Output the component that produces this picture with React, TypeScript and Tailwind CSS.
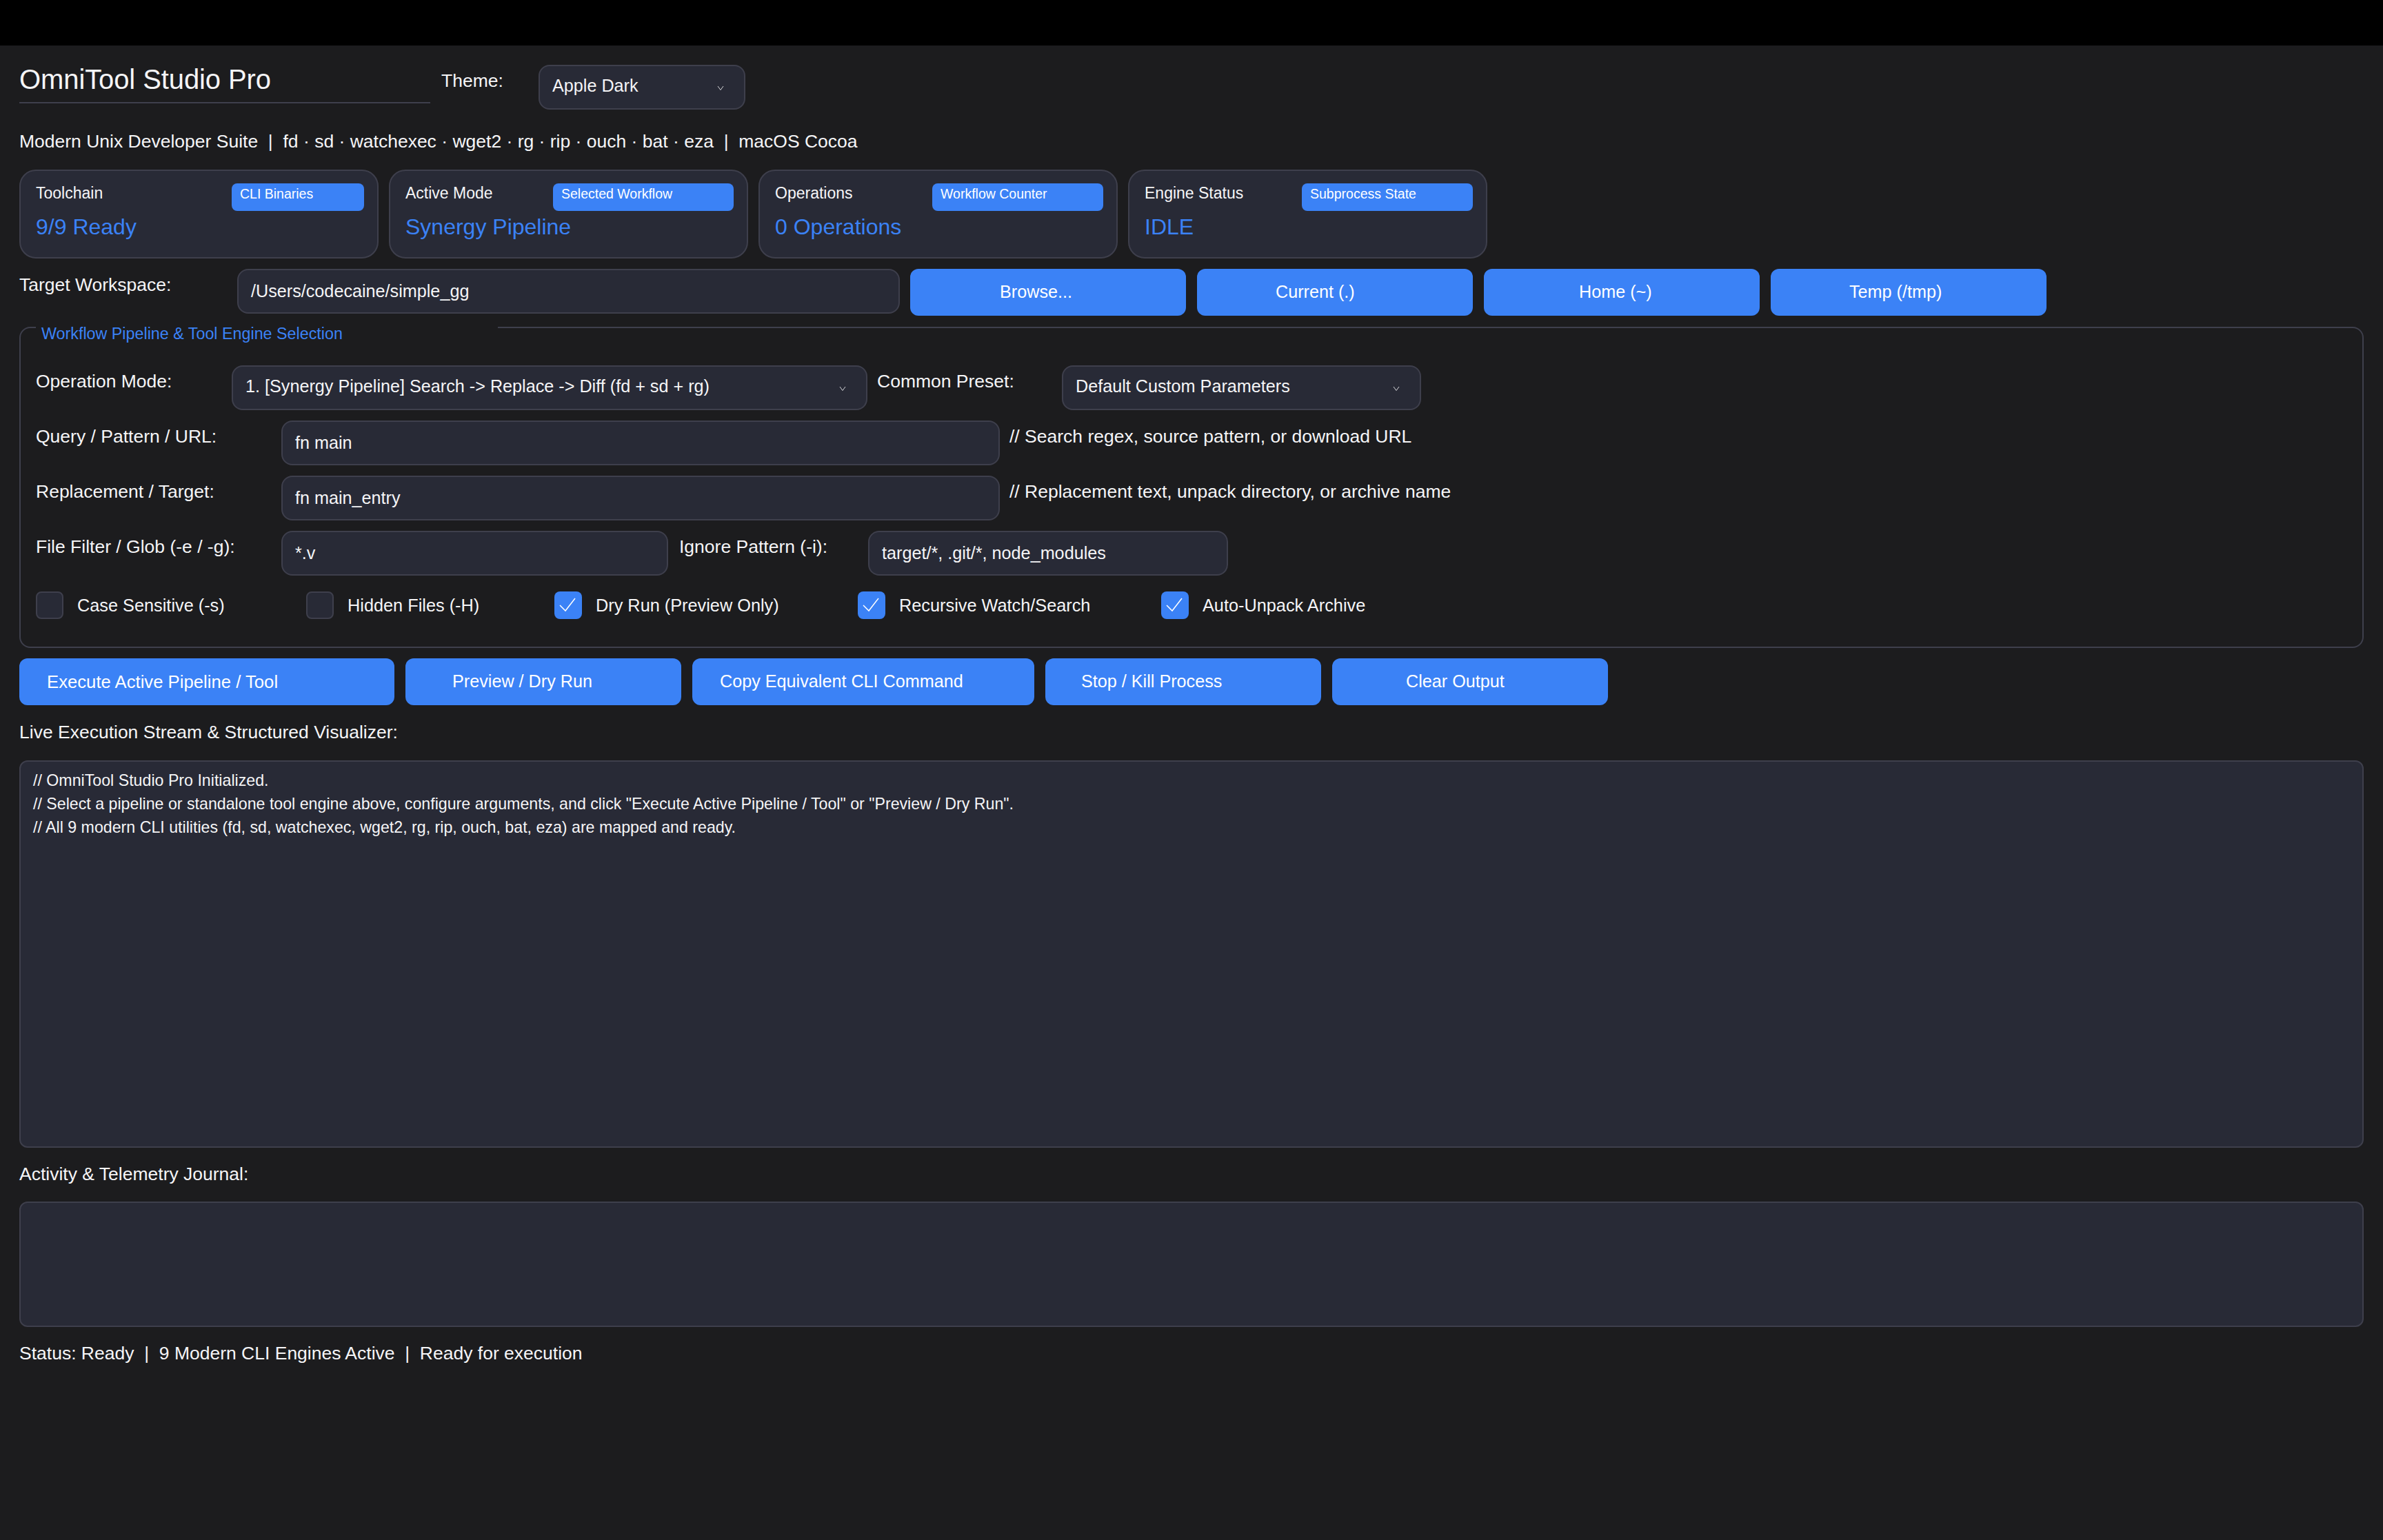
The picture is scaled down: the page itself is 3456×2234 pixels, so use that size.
const font = { fontFamily: '"Liberation Sans", Arial, sans-serif' }

const cards = [
  { title: 'Toolchain', value: '9/9 Ready', badge: 'CLI Binaries', badgeWidth: 'w-[192px]' },
  { title: 'Active Mode', value: 'Synergy Pipeline', badge: 'Selected Workflow', badgeWidth: 'w-[262px]' },
  { title: 'Operations', value: '0 Operations', badge: 'Workflow Counter', badgeWidth: 'w-[248px]' },
  { title: 'Engine Status', value: 'IDLE', badge: 'Subprocess State', badgeWidth: 'w-[248px]' },
]

const pathButtons = [
  { label: 'Browse...', pad: 'pl-[130px]' },
  { label: 'Current (.)', pad: 'pl-[114px]' },
  { label: 'Home (~)', pad: 'pl-[138px]' },
  { label: 'Temp (/tmp)', pad: 'pl-[114px]' },
]

const actionButtons = [
  { label: 'Execute Active Pipeline / Tool', cls: 'w-[544px] pl-[40px] text-[25.7px]' },
  { label: 'Preview / Dry Run', cls: 'w-[400px] pl-[68px] text-[25.2px]' },
  { label: 'Copy Equivalent CLI Command', cls: 'w-[496px] pl-[40px] text-[25.2px]' },
  { label: 'Stop / Kill Process', cls: 'w-[400px] pl-[52px] text-[25.2px]' },
  { label: 'Clear Output', cls: 'w-[400px] pl-[107px] text-[25.2px]' },
]

const checks = [
  { label: 'Case Sensitive (-s)', on: false, cls: 'w-[392px]' },
  { label: 'Hidden Files (-H)', on: false, cls: 'w-[360px]' },
  { label: 'Dry Run (Preview Only)', on: true, cls: 'w-[440px]' },
  { label: 'Recursive Watch/Search', on: true, cls: 'w-[440px]' },
  { label: 'Auto-Unpack Archive', on: true, cls: 'w-[440px]' },
]

function Label({ text, cls = '' }: { text: string; cls?: string }) {
  return <div className={`h-[46px] pt-[2px] flex items-center shrink-0 whitespace-nowrap ${cls}`}>{text}</div>
}

function Field({ text, cls }: { text: string; cls: string }) {
  return (
    <div className={`h-[65px] shrink-0 pl-[18px] pt-[14px] text-[25.2px] leading-[32px] bg-[#282a36] border-2 border-[#3e3f4c] rounded-[16px] whitespace-nowrap ${cls}`}>
      {text}
    </div>
  )
}

function Combo({ text, cls }: { text: string; cls: string }) {
  return (
    <div className={`h-[65px] shrink-0 pl-[18px] pr-[29px] pt-[12px] text-[25.2px] leading-[32px] bg-[#282a36] border-2 border-[#3e3f4c] rounded-[16px] flex justify-between whitespace-nowrap ${cls}`}>
      <span>{text}</span>
      <svg width="10" height="8" viewBox="0 0 10 8" className="mt-[16px]" fill="none" stroke="#d4d4d8" strokeWidth="1">
        <polyline points="1,1 5,6.5 9,1" />
      </svg>
    </div>
  )
}

function Check({ label, on, cls }: { label: string; on: boolean; cls: string }) {
  return (
    <div className={`flex items-center gap-[20px] h-[40px] shrink-0 text-[25.3px] ${cls}`}>
      {on ? (
        <div className="w-[40px] h-[40px] rounded-[8px] bg-[#3b82f6]">
          <svg width="40" height="40" viewBox="0 0 40 40" fill="none" stroke="#ffffff" strokeWidth="1.5">
            <polyline points="8,20 16,28 30,10" />
          </svg>
        </div>
      ) : (
        <div className="w-[40px] h-[40px] rounded-[8px] bg-[#282a36] border-2 border-[#3e3f4c]" />
      )}
      <span className="whitespace-nowrap pt-[1px]">{label}</span>
    </div>
  )
}

export default function App() {
  return (
    <div style={font} className="min-h-screen bg-[#1c1c1e] text-[#f5f5f7] text-[26.5px]">
      <div className="h-[66px] bg-black" />

      <div className="px-[28px] pt-[28px]">
        {/* Header */}
        <div className="flex items-start">
          <div className="w-[596px] h-[56px] border-b-2 border-[#3e3f4c] text-[40px] leading-[42px] tracking-[-0.1px]">OmniTool Studio Pro</div>
          <Label text="Theme:" cls="ml-[16px] w-[141px]" />
          <Combo text="Apple Dark" cls="w-[300px]" />
        </div>

        <div className="mt-[23px] h-[46px] pt-[2px] flex items-center whitespace-pre">
          {'Modern Unix Developer Suite  |  fd · sd · watchexec · wget2 · rg · rip · ouch · bat · eza  |  macOS Cocoa'}
        </div>

        {/* Stat cards */}
        <div className="mt-[18px] flex gap-[15px]">
          {cards.map((card) => (
            <div key={card.title} className="w-[521px] h-[129px] pl-[22px] pr-[19px] bg-[#282a36] border-2 border-[#3e3f4c] rounded-[24px]">
              <div className="flex justify-between pt-[18px]">
                <div className="text-[23px] leading-[28px]">{card.title}</div>
                <div className={`${card.badgeWidth} h-[40px] pl-[12px] text-[19.5px] leading-[30px] bg-[#3b82f6] text-white rounded-[8px]`}>
                  {card.badge}
                </div>
              </div>
              <div className="text-[#3b82f6] text-[32px] leading-[40px] mt-[3px]">{card.value}</div>
            </div>
          ))}
        </div>

        {/* Target workspace */}
        <div className="mt-[15px] flex items-start">
          <Label text="Target Workspace:" cls="w-[316px]" />
          <Field text="/Users/codecaine/simple_gg" cls="w-[961px]" />
          <div className="ml-[15px] flex gap-[16px]">
            {pathButtons.map((b) => (
              <div key={b.label} className={`w-[400px] h-[68px] flex items-center text-[25.2px] text-white bg-[#3b82f6] rounded-[12px] ${b.pad}`}>
                {b.label}
              </div>
            ))}
          </div>
        </div>

        {/* Workflow group */}
        <div className="relative mt-[16px] h-[466px] pl-[22px] pt-[54px] border-2 border-[#3e3f4c] rounded-[16px]">
          <div className="absolute -top-[2px] left-[22px] w-[670px] h-[24px] bg-[#1c1c1e] pl-[8px] text-[23.3px] leading-[20px] text-[#3b82f6]">
            Workflow Pipeline &amp; Tool Engine Selection
          </div>

          <div className="flex items-start">
            <Label text="Operation Mode:" cls="w-[284px]" />
            <Combo text="1. [Synergy Pipeline] Search -> Replace -> Diff (fd + sd + rg)" cls="w-[922px]" />
            <Label text="Common Preset:" cls="ml-[14px] w-[268px]" />
            <Combo text="Default Custom Parameters" cls="w-[521px]" />
          </div>

          <div className="mt-[15px] flex items-start">
            <Label text="Query / Pattern / URL:" cls="w-[356px]" />
            <Field text="fn main" cls="w-[1042px]" />
            <Label text="// Search regex, source pattern, or download URL" cls="ml-[14px]" />
          </div>

          <div className="mt-[15px] flex items-start">
            <Label text="Replacement / Target:" cls="w-[356px]" />
            <Field text="fn main_entry" cls="w-[1042px]" />
            <Label text="// Replacement text, unpack directory, or archive name" cls="ml-[14px]" />
          </div>

          <div className="mt-[15px] flex items-start">
            <Label text="File Filter / Glob (-e / -g):" cls="w-[356px]" />
            <Field text="*.v" cls="w-[561px]" />
            <Label text="Ignore Pattern (-i):" cls="ml-[16px] w-[274px]" />
            <Field text="target/*, .git/*, node_modules" cls="w-[522px]" />
          </div>

          <div className="mt-[23px] flex">
            {checks.map((c) => (
              <Check key={c.label} {...c} />
            ))}
          </div>
        </div>

        {/* Actions */}
        <div className="mt-[15px] flex gap-[16px]">
          {actionButtons.map((b) => (
            <div key={b.label} className={`h-[68px] flex items-center text-white bg-[#3b82f6] rounded-[12px] ${b.cls}`}>
              {b.label}
            </div>
          ))}
        </div>

        <Label text="Live Execution Stream & Structured Visualizer:" cls="mt-[16px]" />

        <div className="mt-[18px] h-[562px] px-[18px] pt-[10px] text-[23.2px] leading-[34px] bg-[#282a36] border-2 border-[#3e3f4c] rounded-[12px]">
          <div>// OmniTool Studio Pro Initialized.</div>
          <div>// Select a pipeline or standalone tool engine above, configure arguments, and click "Execute Active Pipeline / Tool" or "Preview / Dry Run".</div>
          <div>// All 9 modern CLI utilities (fd, sd, watchexec, wget2, rg, rip, ouch, bat, eza) are mapped and ready.</div>
        </div>

        <Label text="Activity & Telemetry Journal:" cls="mt-[15px]" />

        <div className="mt-[17px] h-[182px] bg-[#282a36] border-2 border-[#3e3f4c] rounded-[12px]" />

        <div className="mt-[15px] h-[46px] pt-[2px] flex items-center whitespace-pre">
          {'Status: Ready  |  9 Modern CLI Engines Active  |  Ready for execution'}
        </div>
      </div>
    </div>
  )
}
